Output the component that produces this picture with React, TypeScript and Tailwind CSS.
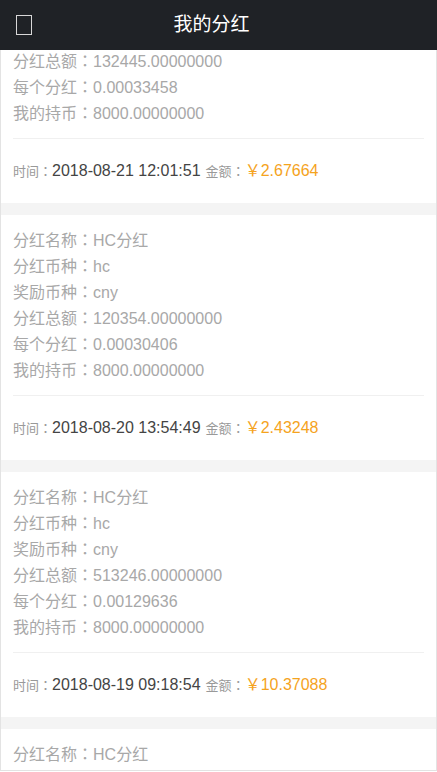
type Dividend = {
  name: string
  coin: string
  reward: string
  total: string
  perUnit: string
  holding: string
  time: string
  amount: string
}

const records: Dividend[] = [
  {
    name: 'HC分红',
    coin: 'hc',
    reward: 'cny',
    total: '132445.00000000',
    perUnit: '0.00033458',
    holding: '8000.00000000',
    time: '2018-08-21 12:01:51',
    amount: '2.67664',
  },
  {
    name: 'HC分红',
    coin: 'hc',
    reward: 'cny',
    total: '120354.00000000',
    perUnit: '0.00030406',
    holding: '8000.00000000',
    time: '2018-08-20 13:54:49',
    amount: '2.43248',
  },
  {
    name: 'HC分红',
    coin: 'hc',
    reward: 'cny',
    total: '513246.00000000',
    perUnit: '0.00129636',
    holding: '8000.00000000',
    time: '2018-08-19 09:18:54',
    amount: '10.37088',
  },
  {
    name: 'HC分红',
    coin: 'hc',
    reward: 'cny',
    total: '498120.00000000',
    perUnit: '0.00121564',
    holding: '8000.00000000',
    time: '2018-08-18 10:02:13',
    amount: '9.72512',
  },
]

// full-width colon, centred like the reference (JP glyph is centred, SC one is not)
function Colon() {
  return (
    <span className="leading-none" style={{ fontFamily: '"Noto Sans CJK JP", sans-serif' }}>
      ：
    </span>
  )
}

function DividendCard({ item }: { item: Dividend }) {
  const rows = [
    ['分红名称', item.name],
    ['分红币种', item.coin],
    ['奖励币种', item.reward],
    ['分红总额', item.total],
    ['每个分红', item.perUnit],
    ['我的持币', item.holding],
  ]

  return (
    <div className="bg-white">
      <div className="px-3 pt-[13px] pb-[11px] text-base leading-[26px] text-[#a8a8a8]">
        {rows.map(([label, value]) => (
          <div key={label} className="h-[26px]">
            {label}
            <Colon />
            {value}
          </div>
        ))}
      </div>
      <div className="mx-3 h-px bg-[#f0f0f0]" />
      <div className="h-16 px-3 py-[19px] leading-[26px] whitespace-nowrap">
        <span className="text-[13px] text-[#999999]">
          时间<Colon />
        </span>
        <span className="text-base text-[#444444]">{item.time}</span>
        <span className="ml-[5px] text-[13px] text-[#999999]">
          金额<Colon />
        </span>
        <span className="text-base text-[#f5a31d]">￥{item.amount}</span>
      </div>
    </div>
  )
}

export default function App() {
  return (
    <div
      className="relative h-[772px] overflow-hidden bg-white"
      style={{ fontFamily: '"Liberation Sans", "Noto Sans CJK SC", sans-serif' }}
    >
      {/* fixed top bar */}
      <div className="absolute inset-x-0 top-0 z-10 h-[50px] bg-[#1f2226]">
        <div className="absolute left-[16px] top-[15px] h-5 w-4 border-[1.5px] border-[#d8d8d8]" />
        <div className="flex h-full items-center justify-center pr-[14px] text-[19px] text-white">
          我的分红
        </div>
      </div>

      <div className="flex h-[771px] flex-col overflow-hidden border-x border-b border-[#e3e3e3]">
        <div className="-mt-[42px] flex flex-col">
          {records.map((item, i) => (
            <div key={item.time}>
              {i > 0 && <div className="h-3 bg-[#f4f4f4]" />}
              <DividendCard item={item} />
            </div>
          ))}
        </div>
      </div>
    </div>
  )
}
